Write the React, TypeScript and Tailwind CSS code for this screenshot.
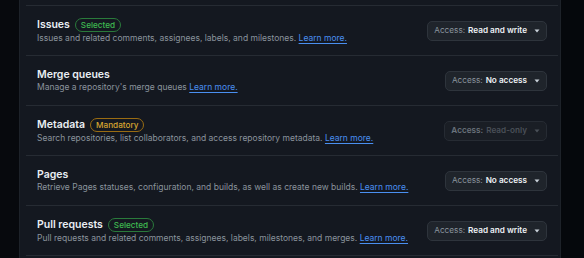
import { ReactNode } from "react";

type Perm = {
  title: string;
  badge?: "Selected" | "Mandatory";
  desc: string;
  access: string;
  disabled?: boolean;
};

const perms: Perm[] = [
  { title: "Issues", badge: "Selected", desc: "Issues and related comments, assignees, labels, and milestones.", access: "Read and write" },
  { title: "Merge queues", desc: "Manage a repository's merge queues", access: "No access" },
  { title: "Metadata", badge: "Mandatory", desc: "Search repositories, list collaborators, and access repository metadata.", access: "Read-only", disabled: true },
  { title: "Pages", desc: "Retrieve Pages statuses, configuration, and builds, as well as create new builds.", access: "No access" },
  { title: "Pull requests", badge: "Selected", desc: "Pull requests and related comments, assignees, labels, milestones, and merges.", access: "Read and write" },
];

function Badge({ kind }: { kind: "Selected" | "Mandatory" }) {
  const cls =
    kind === "Selected"
      ? "border-[#2a7a3b] text-[#3fb950]"
      : "border-[#9a6c12] text-[#d6a531]";
  return (
    <span className={`ml-[5px] inline-flex h-[14px] items-center rounded-full border px-[5px] text-[8.2px] font-medium leading-none ${cls}`}>
      {kind}
    </span>
  );
}

function AccessButton({ value, disabled }: { value: string; disabled?: boolean }) {
  return (
    <div
      className={`flex h-[20px] shrink-0 items-center rounded-[5px] border px-[6px] text-[8.2px] leading-none ${
        disabled ? "border-[#262b33] bg-[#1a1e25]" : "border-[#2e343c] bg-[#1f242b]"
      }`}
    >
      <span className={disabled ? "font-semibold text-[#6b737c]" : "text-[#8b949e]"}>Access:</span>
      <span className={`ml-[3px] font-semibold ${disabled ? "text-[#4a5058]" : "text-[#eef2f6]"}`}>{value}</span>
      <svg width="6" height="4" viewBox="0 0 6 4" className="ml-[7px]">
        <path d="M0.5 0.5 L5.5 0.5 L3 3.5 Z" fill={disabled ? "#4a5058" : "#c9d1d9"} />
      </svg>
    </div>
  );
}

function Row({ p }: { p: Perm }): ReactNode {
  return (
    <div className="flex h-[50px] items-center justify-between border-t border-[#262b33] pl-[11px] pr-[11px]">
      <div className="flex flex-col pt-[1px]">
        <div className="flex items-center">
          <span className="text-[10.5px] font-semibold leading-[12px] text-[#e9eef3]">{p.title}</span>
          {p.badge && <Badge kind={p.badge} />}
        </div>
        <p className="mt-[1px] text-[8.5px] leading-[11px] text-[#8a939c]">
          {p.desc}{" "}
          <a className="text-[#4a8ff0] underline underline-offset-[1.5px]">Learn more.</a>
        </p>
      </div>
      <AccessButton value={p.access} disabled={p.disabled} />
    </div>
  );
}

export default function App() {
  return (
    <div className="flex h-[258px] w-[584px] overflow-hidden bg-[#07090d]" style={{ fontFamily: "Inter, 'Liberation Sans', sans-serif" }}>
      <div className="w-[19px] shrink-0 bg-[#07090d]" />
      <div className="flex-1 border-x border-[#1d2229] bg-[#141820] pt-[5px]">
        <div className="ml-[6px] mr-[2px]">
          {perms.map((p) => (
            <Row key={p.title} p={p} />
          ))}
          <div className="border-t border-[#262b33]" />
        </div>
      </div>
      <div className="w-[23px] shrink-0 bg-[#05080c]" />
    </div>
  );
}
